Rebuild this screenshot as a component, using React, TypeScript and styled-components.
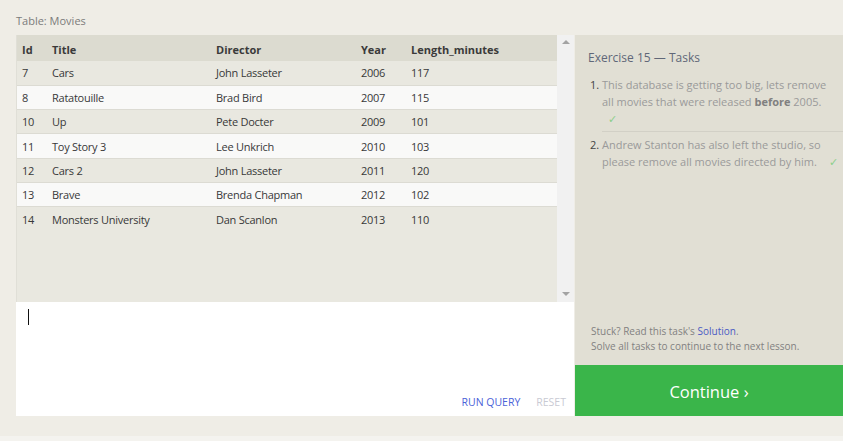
import React from "react";
import styled, { createGlobalStyle } from "styled-components";

const Global = createGlobalStyle`
  html, body { margin: 0; padding: 0; background: #efede6; }
  body { font-family: "Open Sans", "Noto Sans", sans-serif; }
  * { box-sizing: border-box; }
`;

const Page = styled.div`
  width: 843px;
  height: 441px;
  display: flex;
  flex-direction: column;
  background: #efede6;
`;

const Caption = styled.div`
  height: 35px;
  padding-left: 16px;
  display: flex;
  align-items: center;
  padding-top: 5px;
  font-size: 11px;
  color: #7b7b7b;
`;

const Main = styled.div`
  display: flex;
  padding-left: 16px;
  height: 381px;
  gap: 1px;
`;

const LeftCol = styled.div`
  width: 558px;
  display: flex;
  flex-direction: column;
`;

const TableArea = styled.div`
  height: 267px;
  display: flex;
  background: #e9e8e0;
  border-left: 1px solid #e0dfd7;
`;

const TableWrap = styled.div`
  flex: 1;
`;

const Table = styled.table`
  width: 100%;
  border-collapse: collapse;
  font-size: 11px;
  letter-spacing: -0.25px;
  color: #383838;
`;

const Th = styled.th`
  text-align: left;
  font-weight: 700;
  font-size: 11px;
  letter-spacing: 0;
  color: #3a3a3a;
  background: #dcdbd0;
  height: 26px;
  padding: 2px 0 0 5px;
  white-space: nowrap;
`;

const Tr = styled.tr<{ $alt: boolean; $last: boolean }>`
  background: ${(p) => (p.$alt ? "#f9f9f8" : "#e9e8e0")};
  border-bottom: ${(p) => (p.$last ? "none" : "1px solid #dcdbd3")};
`;

const Td = styled.td`
  height: 24.3px;
  padding: 0 0 0 5px;
  white-space: nowrap;
`;

const Scrollbar = styled.div`
  width: 17px;
  background: #f1f1f1;
  display: flex;
  flex-direction: column;
  justify-content: space-between;
  align-items: center;
  padding: 5px 0 6px;
`;

const Arrow = styled.div<{ $down?: boolean }>`
  width: 0;
  height: 0;
  border-left: 4px solid transparent;
  border-right: 4px solid transparent;
  ${(p) =>
    p.$down
      ? "border-top: 4px solid #a3a3a3;"
      : "border-bottom: 4px solid #a3a3a3;"}
`;

const Editor = styled.div`
  flex: 1;
  background: #ffffff;
  position: relative;
  display: flex;
  flex-direction: column;
  justify-content: flex-end;
  padding: 7px 8px 7px 12px;
`;

const Caret = styled.div`
  position: absolute;
  left: 12px;
  top: 7px;
  width: 1px;
  height: 16px;
  background: #111;
`;

const Actions = styled.div`
  display: flex;
  justify-content: flex-end;
  gap: 16px;
  font-size: 10.5px;
`;

const Action = styled.span<{ $muted?: boolean }>`
  color: ${(p) => (p.$muted ? "#c9cad3" : "#4a62d8")};
`;

const RightCol = styled.div`
  flex: 1;
  display: flex;
  flex-direction: column;
  background: #e1dfd4;
`;

const Tasks = styled.div`
  flex: 1;
  padding: 14px 0 0 13px;
`;

const TasksTitle = styled.div`
  font-size: 12px;
  color: #606778;
  margin-bottom: 10px;
`;

const TaskList = styled.ol`
  margin: 0;
  padding: 0;
  list-style: none;
`;

const TaskItem = styled.li<{ $first?: boolean }>`
  display: flex;
  font-size: 11px;
  line-height: 17px;
  color: #9a9a9a;
  padding: ${(p) => (p.$first ? "0" : "4px 0 0")};
`;

const Num = styled.span`
  width: 14px;
  flex: none;
  color: #444;
  padding-left: 2px;
`;

const TaskBody = styled.div<{ $rule?: boolean }>`
  flex: 1;
  padding-right: 3px;
  ${(p) => (p.$rule ? "border-bottom: 1px solid #d2d0c6; padding-bottom: 4px;" : "")}
`;

const Bold = styled.b`
  color: #808080;
`;

const Check = styled.span<{ $gap?: number }>`
  color: #8ccf8c;
  margin-left: ${(p) => p.$gap ?? 6}px;
`;

const Help = styled.div`
  padding: 0 0 11px 16px;
  font-size: 10px;
  line-height: 15px;
  color: #818181;
`;

const Link = styled.span`
  color: #4b5bc4;
`;

const ContinueBtn = styled.div`
  height: 51px;
  background: #3ab54a;
  color: #fff;
  display: flex;
  align-items: center;
  justify-content: center;
  padding-top: 1px;
  font-size: 16.5px;
`;

const Bottom = styled.div`
  flex: 1;
  display: flex;
  flex-direction: column;
  justify-content: flex-end;
`;

const Strip = styled.div`
  height: 5px;
  background: #f4f3ef;
`;

const rows = [
  [7, "Cars", "John Lasseter", 2006, 117],
  [8, "Ratatouille", "Brad Bird", 2007, 115],
  [10, "Up", "Pete Docter", 2009, 101],
  [11, "Toy Story 3", "Lee Unkrich", 2010, 103],
  [12, "Cars 2", "John Lasseter", 2011, 120],
  [13, "Brave", "Brenda Chapman", 2012, 102],
  [14, "Monsters University", "Dan Scanlon", 2013, 110],
];

const colW = [30, 164, 145, 50, 151];

export default function App() {
  return (
    <Page>
      <Global />
      <Caption>Table: Movies</Caption>
      <Main>
        <LeftCol>
          <TableArea>
            <TableWrap>
              <Table>
                <colgroup>
                  {colW.map((w, i) => (
                    <col key={i} style={{ width: w }} />
                  ))}
                </colgroup>
                <thead>
                  <tr>
                    {["Id", "Title", "Director", "Year", "Length_minutes"].map((h) => (
                      <Th key={h}>{h}</Th>
                    ))}
                  </tr>
                </thead>
                <tbody>
                  {rows.map((r, i) => (
                    <Tr key={i} $alt={i % 2 === 1} $last={i === rows.length - 1}>
                      {r.map((c, j) => (
                        <Td key={j}>{c}</Td>
                      ))}
                    </Tr>
                  ))}
                </tbody>
              </Table>
            </TableWrap>
            <Scrollbar>
              <Arrow />
              <Arrow $down />
            </Scrollbar>
          </TableArea>
          <Editor>
            <Caret />
            <Actions>
              <Action>RUN QUERY</Action>
              <Action $muted>RESET</Action>
            </Actions>
          </Editor>
        </LeftCol>
        <RightCol>
          <Tasks>
            <TasksTitle>Exercise 15 — Tasks</TasksTitle>
            <TaskList>
              <TaskItem $first>
                <Num>1.</Num>
                <TaskBody $rule>
                  This database is getting too big, lets remove all movies that were released{" "}
                  <Bold>before</Bold> 2005.
                  <br />
                  <Check>✓</Check>
                </TaskBody>
              </TaskItem>
              <TaskItem>
                <Num>2.</Num>
                <TaskBody>
                  Andrew Stanton has also left the studio, so please remove all movies directed by
                  him.<Check $gap={12}>✓</Check>
                </TaskBody>
              </TaskItem>
            </TaskList>
          </Tasks>
          <Help>
            Stuck? Read this task's <Link>Solution</Link>.
            <br />
            Solve all tasks to continue to the next lesson.
          </Help>
          <ContinueBtn>Continue ›</ContinueBtn>
        </RightCol>
      </Main>
      <Bottom>
        <Strip />
      </Bottom>
    </Page>
  );
}
